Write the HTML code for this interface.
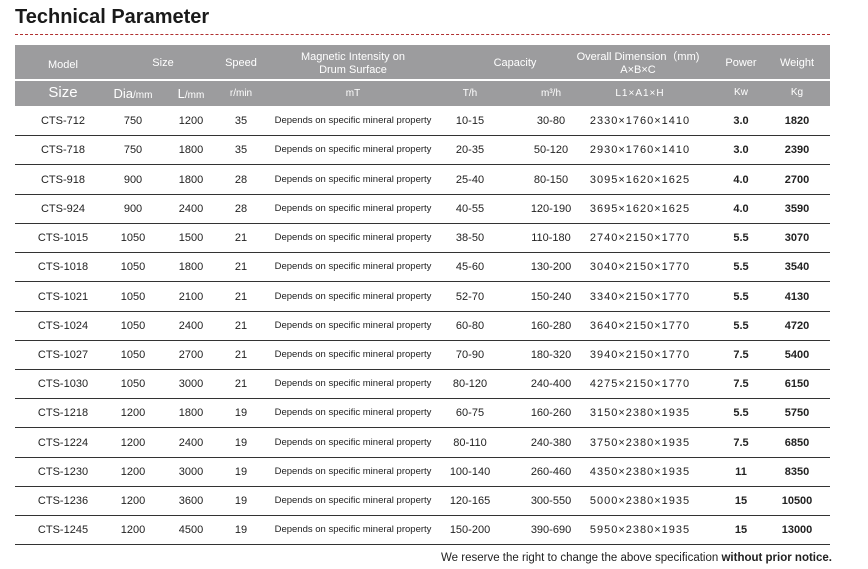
<!DOCTYPE html><html><head><style>
body{margin:0;width:868px;height:569px;background:#fff;font-family:"Liberation Sans",Arial,sans-serif;color:#222;position:relative;overflow:hidden}
.t{position:absolute;left:15px;top:6px;font-size:20px;font-weight:bold;color:#1a1a1a}
.dash{position:absolute;left:15px;top:34px;width:815px;border-top:1px dashed #b03030}
.h{position:absolute;left:15px;width:815px;background:#9c9c9e;color:#fff}
.c{position:absolute;text-align:center;transform:translateX(-50%);white-space:nowrap}
.row{position:absolute;left:15px;width:815px;height:29px;border-bottom:1px solid #333;font-size:11px}
.row .c{top:9px}
.row .c:nth-child(8){letter-spacing:1px}
.s{font-size:9.5px}
b{font-weight:bold}
.note{position:absolute;right:36px;top:552px;font-size:11.5px;color:#222}
</style></head><body>
<div class="t">Technical Parameter</div>
<div class="dash"></div>
<div class="h" style="top:45px;height:34px;font-size:11px">
<div class="c" style="left:48px;top:14px">Model</div>
<div class="c" style="left:148px;top:12px">Size</div>
<div class="c" style="left:226px;top:12px">Speed</div>
<div class="c" style="left:338px;top:6px;line-height:13px">Magnetic Intensity on<br>Drum Surface</div>
<div class="c" style="left:500px;top:12px">Capacity</div>
<div class="c" style="left:623px;top:6px;line-height:13px">Overall Dimension（mm)<br>A×B×C</div>
<div class="c" style="left:726px;top:12px">Power</div>
<div class="c" style="left:782px;top:12px">Weight</div>
</div>
<div class="h" style="top:81px;height:25px;font-size:11px">
<div class="c" style="left:48px;top:3px;font-size:15px">Size</div>
<div class="c" style="left:118px;top:5px;font-size:13px">Dia<span style="font-size:10px">/mm</span></div>
<div class="c" style="left:176px;top:5px;font-size:13px">L<span style="font-size:10px">/mm</span></div>
<div class="c" style="left:226px;top:7px;font-size:10px">r/min</div>
<div class="c" style="left:338px;top:7px;font-size:10px">mT</div>
<div class="c" style="left:455px;top:7px;font-size:10px">T/h</div>
<div class="c" style="left:536px;top:7px;font-size:10px">m³/h</div>
<div class="c" style="left:625px;top:7px;font-size:10px;letter-spacing:1px">L1×A1×H</div>
<div class="c" style="left:726px;top:6px;font-size:10px">Kw</div>
<div class="c" style="left:782px;top:6px;font-size:10px">Kg</div>
</div>
<div class="row" style="top:106px"><div class="c" style="left:48px">CTS-712</div><div class="c" style="left:118px">750</div><div class="c" style="left:176px">1200</div><div class="c" style="left:226px">35</div><div class="c s" style="left:338px">Depends on specific mineral property</div><div class="c" style="left:455px">10-15</div><div class="c" style="left:536px">30-80</div><div class="c" style="left:625px">2330×1760×1410</div><div class="c" style="left:726px"><b>3.0</b></div><div class="c" style="left:782px"><b>1820</b></div></div>
<div class="row" style="top:135px"><div class="c" style="left:48px">CTS-718</div><div class="c" style="left:118px">750</div><div class="c" style="left:176px">1800</div><div class="c" style="left:226px">35</div><div class="c s" style="left:338px">Depends on specific mineral property</div><div class="c" style="left:455px">20-35</div><div class="c" style="left:536px">50-120</div><div class="c" style="left:625px">2930×1760×1410</div><div class="c" style="left:726px"><b>3.0</b></div><div class="c" style="left:782px"><b>2390</b></div></div>
<div class="row" style="top:165px"><div class="c" style="left:48px">CTS-918</div><div class="c" style="left:118px">900</div><div class="c" style="left:176px">1800</div><div class="c" style="left:226px">28</div><div class="c s" style="left:338px">Depends on specific mineral property</div><div class="c" style="left:455px">25-40</div><div class="c" style="left:536px">80-150</div><div class="c" style="left:625px">3095×1620×1625</div><div class="c" style="left:726px"><b>4.0</b></div><div class="c" style="left:782px"><b>2700</b></div></div>
<div class="row" style="top:194px"><div class="c" style="left:48px">CTS-924</div><div class="c" style="left:118px">900</div><div class="c" style="left:176px">2400</div><div class="c" style="left:226px">28</div><div class="c s" style="left:338px">Depends on specific mineral property</div><div class="c" style="left:455px">40-55</div><div class="c" style="left:536px">120-190</div><div class="c" style="left:625px">3695×1620×1625</div><div class="c" style="left:726px"><b>4.0</b></div><div class="c" style="left:782px"><b>3590</b></div></div>
<div class="row" style="top:223px"><div class="c" style="left:48px">CTS-1015</div><div class="c" style="left:118px">1050</div><div class="c" style="left:176px">1500</div><div class="c" style="left:226px">21</div><div class="c s" style="left:338px">Depends on specific mineral property</div><div class="c" style="left:455px">38-50</div><div class="c" style="left:536px">110-180</div><div class="c" style="left:625px">2740×2150×1770</div><div class="c" style="left:726px"><b>5.5</b></div><div class="c" style="left:782px"><b>3070</b></div></div>
<div class="row" style="top:252px"><div class="c" style="left:48px">CTS-1018</div><div class="c" style="left:118px">1050</div><div class="c" style="left:176px">1800</div><div class="c" style="left:226px">21</div><div class="c s" style="left:338px">Depends on specific mineral property</div><div class="c" style="left:455px">45-60</div><div class="c" style="left:536px">130-200</div><div class="c" style="left:625px">3040×2150×1770</div><div class="c" style="left:726px"><b>5.5</b></div><div class="c" style="left:782px"><b>3540</b></div></div>
<div class="row" style="top:282px"><div class="c" style="left:48px">CTS-1021</div><div class="c" style="left:118px">1050</div><div class="c" style="left:176px">2100</div><div class="c" style="left:226px">21</div><div class="c s" style="left:338px">Depends on specific mineral property</div><div class="c" style="left:455px">52-70</div><div class="c" style="left:536px">150-240</div><div class="c" style="left:625px">3340×2150×1770</div><div class="c" style="left:726px"><b>5.5</b></div><div class="c" style="left:782px"><b>4130</b></div></div>
<div class="row" style="top:311px"><div class="c" style="left:48px">CTS-1024</div><div class="c" style="left:118px">1050</div><div class="c" style="left:176px">2400</div><div class="c" style="left:226px">21</div><div class="c s" style="left:338px">Depends on specific mineral property</div><div class="c" style="left:455px">60-80</div><div class="c" style="left:536px">160-280</div><div class="c" style="left:625px">3640×2150×1770</div><div class="c" style="left:726px"><b>5.5</b></div><div class="c" style="left:782px"><b>4720</b></div></div>
<div class="row" style="top:340px"><div class="c" style="left:48px">CTS-1027</div><div class="c" style="left:118px">1050</div><div class="c" style="left:176px">2700</div><div class="c" style="left:226px">21</div><div class="c s" style="left:338px">Depends on specific mineral property</div><div class="c" style="left:455px">70-90</div><div class="c" style="left:536px">180-320</div><div class="c" style="left:625px">3940×2150×1770</div><div class="c" style="left:726px"><b>7.5</b></div><div class="c" style="left:782px"><b>5400</b></div></div>
<div class="row" style="top:369px"><div class="c" style="left:48px">CTS-1030</div><div class="c" style="left:118px">1050</div><div class="c" style="left:176px">3000</div><div class="c" style="left:226px">21</div><div class="c s" style="left:338px">Depends on specific mineral property</div><div class="c" style="left:455px">80-120</div><div class="c" style="left:536px">240-400</div><div class="c" style="left:625px">4275×2150×1770</div><div class="c" style="left:726px"><b>7.5</b></div><div class="c" style="left:782px"><b>6150</b></div></div>
<div class="row" style="top:398px"><div class="c" style="left:48px">CTS-1218</div><div class="c" style="left:118px">1200</div><div class="c" style="left:176px">1800</div><div class="c" style="left:226px">19</div><div class="c s" style="left:338px">Depends on specific mineral property</div><div class="c" style="left:455px">60-75</div><div class="c" style="left:536px">160-260</div><div class="c" style="left:625px">3150×2380×1935</div><div class="c" style="left:726px"><b>5.5</b></div><div class="c" style="left:782px"><b>5750</b></div></div>
<div class="row" style="top:428px"><div class="c" style="left:48px">CTS-1224</div><div class="c" style="left:118px">1200</div><div class="c" style="left:176px">2400</div><div class="c" style="left:226px">19</div><div class="c s" style="left:338px">Depends on specific mineral property</div><div class="c" style="left:455px">80-110</div><div class="c" style="left:536px">240-380</div><div class="c" style="left:625px">3750×2380×1935</div><div class="c" style="left:726px"><b>7.5</b></div><div class="c" style="left:782px"><b>6850</b></div></div>
<div class="row" style="top:457px"><div class="c" style="left:48px">CTS-1230</div><div class="c" style="left:118px">1200</div><div class="c" style="left:176px">3000</div><div class="c" style="left:226px">19</div><div class="c s" style="left:338px">Depends on specific mineral property</div><div class="c" style="left:455px">100-140</div><div class="c" style="left:536px">260-460</div><div class="c" style="left:625px">4350×2380×1935</div><div class="c" style="left:726px"><b>11</b></div><div class="c" style="left:782px"><b>8350</b></div></div>
<div class="row" style="top:486px"><div class="c" style="left:48px">CTS-1236</div><div class="c" style="left:118px">1200</div><div class="c" style="left:176px">3600</div><div class="c" style="left:226px">19</div><div class="c s" style="left:338px">Depends on specific mineral property</div><div class="c" style="left:455px">120-165</div><div class="c" style="left:536px">300-550</div><div class="c" style="left:625px">5000×2380×1935</div><div class="c" style="left:726px"><b>15</b></div><div class="c" style="left:782px"><b>10500</b></div></div>
<div class="row" style="top:515px"><div class="c" style="left:48px">CTS-1245</div><div class="c" style="left:118px">1200</div><div class="c" style="left:176px">4500</div><div class="c" style="left:226px">19</div><div class="c s" style="left:338px">Depends on specific mineral property</div><div class="c" style="left:455px">150-200</div><div class="c" style="left:536px">390-690</div><div class="c" style="left:625px">5950×2380×1935</div><div class="c" style="left:726px"><b>15</b></div><div class="c" style="left:782px"><b>13000</b></div></div>
<div class="note">We reserve the right to change the above specification <b>without prior notice.</b></div>
</body></html>
